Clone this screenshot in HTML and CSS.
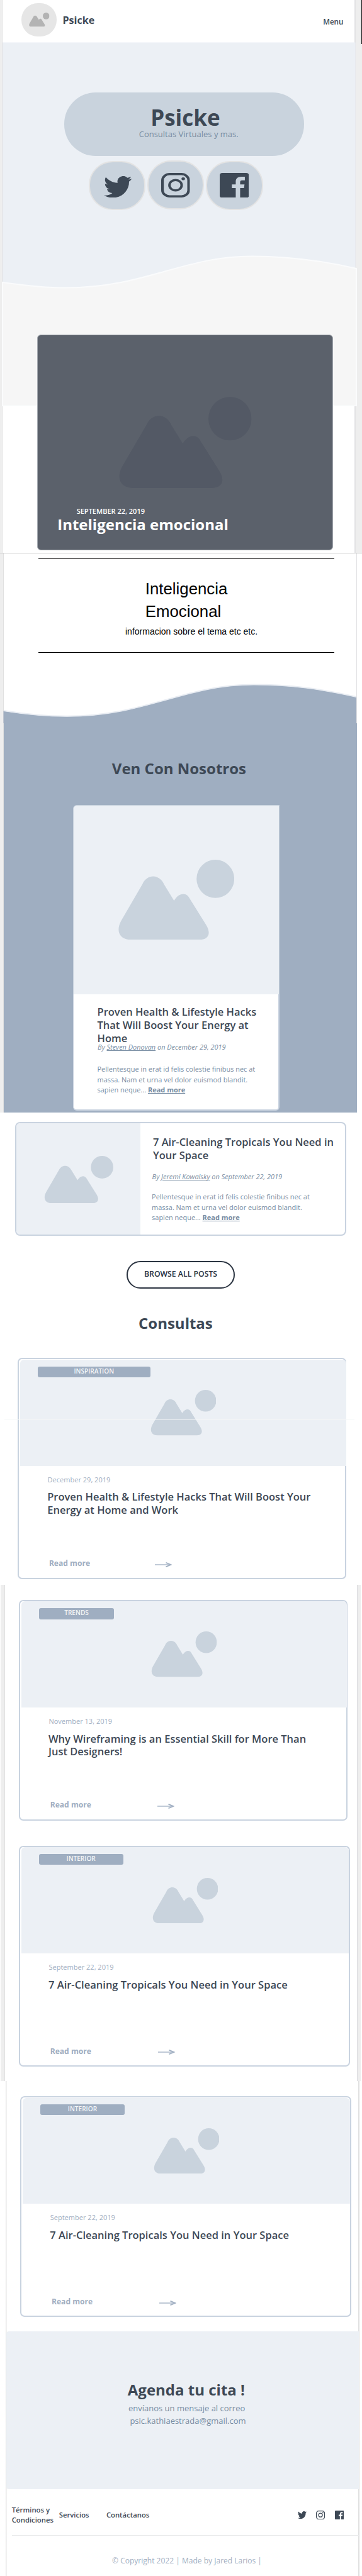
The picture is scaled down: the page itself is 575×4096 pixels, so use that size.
FILE: index.html
```html
<!DOCTYPE html>
<html lang="es">
<head>
<meta charset="utf-8">
<title>Psicke</title>
<link rel="stylesheet" href="styles.css">
</head>
<body>
<svg class="defs" aria-hidden="true">
  <symbol id="picture" viewBox="0 0 212.7 145.6" preserveAspectRatio="none">
    <path d="M6.3 111L45 44.6C53 25.5 76 25.5 84.4 44.6L102.8 74.6C112 59 126 59 131.6 71.3L161 118C171 134 166 145.6 148 145.6H24.7C3 145.6-4 130 6.3 111Z"/>
    <ellipse cx="178.2" cy="34.8" rx="34.4" ry="34.8"/>
  </symbol>
  <symbol id="twitter" viewBox="0 2.2 24 19.6" preserveAspectRatio="none">
    <path d="M23.95 4.57a10 10 0 0 1-2.82.77 4.96 4.96 0 0 0 2.16-2.72c-.95.55-2 .95-3.13 1.18a4.92 4.92 0 0 0-8.38 4.48C7.69 8.1 4.07 6.13 1.64 3.16a4.92 4.92 0 0 0 1.52 6.57 4.9 4.9 0 0 1-2.23-.61v.06a4.92 4.92 0 0 0 3.95 4.83 5 5 0 0 1-2.21.08 4.94 4.94 0 0 0 4.6 3.42A9.87 9.87 0 0 1 0 19.54a14 14 0 0 0 7.55 2.21c9.05 0 14-7.5 14-13.98 0-.21 0-.42-.02-.63a9.94 9.94 0 0 0 2.42-2.57Z"/>
  </symbol>
  <symbol id="instagram" viewBox="0 0 24 24" preserveAspectRatio="none">
    <rect x="1.1" y="1.1" width="21.8" height="21.8" rx="6" fill="none" stroke="currentColor" stroke-width="2.2"/>
    <circle cx="12" cy="12" r="5.1" fill="none" stroke="currentColor" stroke-width="2.1"/>
    <circle cx="18.4" cy="5.7" r="1.45"/>
  </symbol>
  <symbol id="facebook" viewBox="0 0 24 24" preserveAspectRatio="none">
    <path d="M2.2 0H21.8A2.2 2.2 0 0 1 24 2.2V21.8A2.2 2.2 0 0 1 21.8 24H16.8V14.6H20L20.4 11.1H16.8V8.9C16.8 7.7 17.2 7.1 18.6 7.1H20.7V3.7H17.9C14.7 3.7 13.2 5.5 13.2 8.4V11.1H10V14.6H13.2V24H2.2A2.2 2.2 0 0 1 0 21.8V2.2A2.2 2.2 0 0 1 2.2 0Z"/>
  </symbol>
  <symbol id="arrow" viewBox="0 0 27 8">
    <path d="M0 4H24" fill="none" stroke="#b9c5d3" stroke-width="1.8"/>
    <path d="M17.5 .7L25.5 4L17.5 7.3" fill="none" stroke="#9faec1" stroke-width="1.7"/>
  </symbol>
</svg>

<div class="page">
  <section class="top">
    <svg class="top-wave" viewBox="0 0 575 646">
      <path d="M4 67.5H564.5V646H4Z" fill="#ecf0f5"/>
      <path d="M4 449C40 454 75 457.6 104.5 457.6C230 457.6 290 407.5 400 407.5C460 407.5 510 414 566 427V645.5H4Z" fill="#f6f6f6" stroke="#fafbfc" stroke-width="2"/>
    </svg>
    <header class="bar">
      <div class="avatar"><svg><use href="#picture"/></svg></div>
      <b class="brand">Psicke</b>
      <span class="menu">Menu</span>
    </header>
    <div class="pill">
      <h1>Psicke</h1>
      <p>Consultas Virtuales y mas.</p>
    </div>
    <div class="social">
      <a class="bubble"><svg class="tw"><use href="#twitter"/></svg></a>
      <a class="bubble raised"><svg class="ig"><use href="#instagram"/></svg></a>
      <a class="bubble"><svg class="fb"><use href="#facebook"/></svg></a>
    </div>
    <article class="feature">
      <svg><use href="#picture"/></svg>
      <time>SEPTEMBER 22, 2019</time>
      <h2>Inteligencia emocional</h2>
    </article>
    <i class="edge"></i>
  </section>

  <section class="middle">
    <div class="topic">
      <h2>Inteligencia<br>Emocional</h2>
      <p>informacion sobre el tema etc etc.</p>
    </div>
    <svg class="wave" viewBox="0 0 575 70">
      <path d="M5.5 50.5C40 56 75 59.2 106.3 59.2C232 59.2 292 9 403 9C463 9 510 16 566 28.5V71H5.5Z" fill="#9faec1"/>
      <path d="M6 50C40 55.5 75 58.7 106.3 58.7C232 58.7 292 8.5 403 8.5C463 8.5 510 15.5 566 28" fill="none" stroke="#e9edf3" stroke-width="2"/>
    </svg>
    <div class="blue">
      <h2>Ven Con Nosotros</h2>
      <article class="story">
        <div class="story-image"><svg><use href="#picture"/></svg></div>
        <div class="story-body">
          <h3>Proven Health &amp; Lifestyle Hacks<br>That Will Boost Your Energy at<br>Home</h3>
          <p class="by">By <u>Steven Donovan</u> on December 29, 2019</p>
          <p class="text">Pellentesque in erat id felis colestie finibus nec at<br>massa. Nam et urna vel dolor euismod blandit.<br>sapien neque... <b>Read more</b></p>
        </div>
      </article>
    </div>
  </section>

  <section class="posts-a">
    <article class="row-story">
      <div class="row-image"><svg><use href="#picture"/></svg></div>
      <div class="row-body">
        <h3>7 Air-Cleaning Tropicals You Need in<br>Your Space</h3>
        <p class="by">By <u>Jeremi Kowalsky</u> on September 22, 2019</p>
        <p class="text">Pellentesque in erat id felis colestie finibus nec at<br>massa. Nam et urna vel dolor euismod blandit.<br>sapien neque... <b>Read more</b></p>
      </div>
    </article>
    <a class="browse">BROWSE ALL POSTS</a>
    <h2 class="consultas">Consultas</h2>
    <article class="post post-one">
      <div class="post-image">
        <span class="tag tag-inspiration">INSPIRATION</span>
        <svg><use href="#picture"/></svg>
        <i class="seam"></i>
      </div>
      <time>December 29, 2019</time>
      <h3>Proven Health &amp; Lifestyle Hacks That Will Boost Your<br>Energy at Home and Work</h3>
      <div class="more"><b>Read more</b><svg><use href="#arrow"/></svg></div>
    </article>
  </section>

  <section class="posts-b">
    <article class="post post-two">
      <div class="post-image">
        <span class="tag tag-trends">TRENDS</span>
        <svg><use href="#picture"/></svg>
      </div>
      <time>November 13, 2019</time>
      <h3>Why Wireframing is an Essential Skill for More Than<br>Just Designers!</h3>
      <div class="more"><b>Read more</b><svg><use href="#arrow"/></svg></div>
    </article>
    <article class="post post-three">
      <div class="post-image">
        <span class="tag tag-interior">INTERIOR</span>
        <svg><use href="#picture"/></svg>
      </div>
      <time>September 22, 2019</time>
      <h3>7 Air-Cleaning Tropicals You Need in Your Space</h3>
      <div class="more"><b>Read more</b><svg><use href="#arrow"/></svg></div>
    </article>
  </section>

  <section class="bottom">
    <article class="post post-four">
      <div class="post-image">
        <span class="tag tag-interior">INTERIOR</span>
        <svg><use href="#picture"/></svg>
      </div>
      <time>September 22, 2019</time>
      <h3>7 Air-Cleaning Tropicals You Need in Your Space</h3>
      <div class="more"><b>Read more</b><svg><use href="#arrow"/></svg></div>
    </article>
    <div class="cta">
      <h2>Agenda tu cita !</h2>
      <p>envíanos un mensaje al correo</p>
      <p class="mail">psic.kathiaestrada@gmail.com</p>
    </div>
    <footer>
      <nav>
        <a class="terms">Términos y<br>Condiciones</a>
        <a class="services">Servicios</a>
        <a class="contact">Contáctanos</a>
        <svg class="tw"><use href="#twitter"/></svg>
        <svg class="ig"><use href="#instagram"/></svg>
        <svg class="fb"><use href="#facebook"/></svg>
      </nav>
      <p>© Copyright 2022 | Made by Jared Larios |</p>
    </footer>
  </section>
</div>
</body>
</html>
```
FILE: styles.css
```css
* { box-sizing: border-box; margin: 0; padding: 0; }
body {
  width: 575px;
  background: #fff;
  color: #3d4855;
  font-family: "Open Sans", "Noto Sans", sans-serif;
  white-space: nowrap;
}
svg { display: block; fill: currentColor; }
.defs { position: absolute; width: 0; height: 0; }
.page { width: 575px; height: 4096px; overflow: hidden; }
h2 { font-size: 24px; line-height: 30px; font-weight: 700; }
h3 { font-size: 16.5px; line-height: 20.9px; font-weight: 600; }
section { display: flow-root; }

/* Header and hero */
.top {
  position: relative;
  height: 880px;
  background: linear-gradient(90deg, #eee 3px, #e0e0e0 3px 4px, #fff 4px 563.5px, #e2e2e4 563.5px 565px, #eee 565px);
  border-bottom: 1px solid #ccc;
}
.top-wave { position: absolute; left: 0; top: 0; width: 575px; height: 646px; }
.edge { position: absolute; right: 0; top: 0; width: 1px; height: 70px; background: #111; }
.bar { position: relative; display: flex; align-items: flex-start; height: 67.5px; padding: 4.6px 0 0 34px; }
.avatar { width: 56.4px; height: 53.1px; padding: 15.6px 0 0 12px; border-radius: 26px; background: #e6e6e6; color: #b3b3b3; }
.avatar svg { width: 32.5px; height: 22.5px; }
.brand { margin: 17px 0 0 9.1px; width: 413.7px; font-size: 16.1px; line-height: 20px; }
.menu { margin-top: 22.7px; font-size: 11.65px; line-height: 16px; font-weight: 600; }
.pill {
  position: relative;
  width: 381.7px;
  height: 100.5px;
  margin: 79.9px 0 0 101.6px;
  padding-top: 21.8px;
  border-radius: 50px;
  background: #c9d3dd;
}
.pill h1 { padding-left: 137.6px; font-size: 35px; line-height: 36px; }
.pill p { padding-left: 119.1px; font-size: 13px; line-height: 16px; color: #778ca2; }
.social { position: relative; display: flex; gap: 3.2px; margin: 8px 0 0 140.6px; height: 77.7px; }
.bubble {
  display: flex;
  justify-content: center;
  width: 90.2px;
  height: 77.7px;
  border: 2px solid #e3e3e3;
  border-radius: 38px;
  background: #c9d3dd;
}
.raised { margin-top: -1px; }
.bubble .tw { width: 44.5px; height: 34.5px; margin: 22px 0 0 4px; }
.bubble .ig { width: 45.7px; height: 39px; margin: 18px 0 0 0; }
.bubble .fb { width: 46.3px; height: 39.5px; margin: 17px 0 0 0; }
.feature {
  position: relative;
  width: 470px;
  height: 343.2px;
  margin: 198px 0 0 59px;
  padding-top: 98.3px;
  border: 1px solid #a7acb3;
  border-radius: 6px;
  background: #5b616b;
  color: #fff;
}
.feature svg { width: 211.6px; height: 145px; margin-left: 128.1px; color: #535965; }
.feature time { display: block; margin: 30.2px 0 0 61.7px; font-size: 11px; line-height: 14px; font-weight: 600; }
.feature h2 { padding-left: 31.2px; line-height: 27px; }

/* Topic and featured story */
.middle {
  height: 889.3px;
  padding-top: 8px;
  background: linear-gradient(90deg, #eee 5px, #e0e0e0 5px 6px, #fff 6px 566px, #e2e2e4 566px 567px, #fff 567px);
}
.topic {
  width: 470.5px;
  height: 150.3px;
  margin-left: 60.5px;
  padding-top: 30px;
  border: solid #000;
  border-width: 1px 0;
  color: #000;
  font-family: "Liberation Sans", Arial, sans-serif;
}
.topic h2 { padding-left: 170.3px; font-size: 25.8px; line-height: 35.9px; font-weight: 400; }
.topic p { margin: 3.9px 0 0 138.5px; font-size: 14px; line-height: 18px; }
.wave { width: 575px; height: 70px; margin-top: 41.7px; }
.blue { display: flow-root; width: 561.5px; height: 619.3px; margin-left: 5.5px; background: #9faec1; }
.blue > h2 { margin: 56.9px 0 43.3px; padding-left: 172.3px; }
.story { width: 327.8px; margin-left: 110.4px; }
.story-image { height: 300.6px; padding: 85.8px 0 0 70px; border: 1px solid #c6d0dc; border-bottom: 0; border-radius: 6px 0 0 0; background: #ecf0f5; }
.story-image svg { width: 185.2px; height: 127.3px; color: #c9d3dd; }
.story-body { height: 185.1px; padding: 18.3px 0 0 37.6px; border: solid #c9d3e0; border-width: 0 2px 2px 1px; border-radius: 0 0 6px 6px; background: #fff; }
.by { font-size: 10.95px; line-height: 14px; font-style: italic; color: #778ca2; }
.text { font-size: 10.97px; line-height: 16.5px; color: #778ca2; }
.text b { text-decoration: underline; }
.story .by { margin: -3.4px 0 19.8px .6px; }

/* Posts */
.posts-a { height: 750.6px; padding-top: 14.8px; }
.row-story { display: flex; width: 525.8px; height: 181px; margin-left: 24.2px; border: 2px solid #c9d3e0; border-radius: 8px; }
.row-image { width: 197.1px; padding: 51.5px 0 0 43.8px; border-radius: 6px 0 0 6px; background: #ecf0f5; }
.row-image svg { width: 110px; height: 75.3px; color: #c9d3dd; }
.row-body { padding: 20.2px 0 0 19.7px; }
.row-body .by { margin: 15.8px 0 17.5px -1.4px; }
.row-body .text { margin-left: -1.9px; }
.browse {
  display: block;
  width: 172px;
  height: 43.5px;
  margin: 40.1px 0 0 201px;
  padding: 10.5px 0 0 26px;
  border: 2px solid #2b3441;
  border-radius: 22px;
  color: #262f3d;
  font-size: 12.25px;
  line-height: 16px;
  font-weight: 600;
}
.consultas { margin: 40.4px 0 40.4px 220px; }
.posts-b {
  height: 789.5px;
  padding-top: 23.8px;
  background: linear-gradient(90deg, #fff 1px, #eee 1px 7px, #e0e0e0 7px 8px, #fff 8px 567.5px, #e2e2e4 567.5px 569px, #eee 569px 573px, #fff 573px);
}
.post { height: 351.1px; border: 2px solid #c9d3e0; border-radius: 7px; }
.post-one { width: 521.8px; margin-left: 28.2px; }
.post-two { width: 522.3px; margin-left: 30px; }
.post-three { width: 526px; margin: 40.1px 0 0 30px; }
.post-four { width: 525.7px; margin-left: 32.3px; }
.post-image { position: relative; height: 168.6px; margin: .6px 0 0 1.7px; padding-top: 11px; border-radius: 6px 6px 0 0; background: #ecf0f5; }
.post-one .post-image { margin-right: -2px; }
.post-two .post-image { margin-right: -1px; }
.post-image svg { width: 104.5px; height: 72.4px; margin: 19.8px 0 0 206.8px; color: #c9d3dd; }
.tag { display: block; height: 17.3px; margin-left: 27.9px; border-radius: 3px; background: #9faec1; color: #f4f6f8; font-size: 10.1px; line-height: 15px; font-weight: 600; text-align: center; }
.tag-inspiration { width: 179px; }
.tag-trends { width: 119.9px; }
.tag-interior { width: 134.2px; }
.post-three .post-image, .post-four .post-image { padding-top: 10.1px; }
.post-three .post-image svg, .post-four .post-image svg { margin: 20.7px 0 0 208px; }
.seam { position: absolute; left: -25px; right: -13px; top: 94px; height: 2px; background: rgba(246, 247, 248, .5); }
.post time { display: block; margin: 14.9px 0 10.8px 45.4px; font-size: 11.04px; line-height: 14px; color: #9faec1; }
.post h3 { height: 41.8px; padding-left: 45px; }
.more { display: flex; margin: 66.1px 0 0 47.7px; color: #9faec1; font-size: 12.1px; line-height: 16px; }
.more b { width: 168.5px; }
.more svg { width: 27px; height: 8px; margin-top: 5.7px; }
.post-two .more b { width: 170px; }
.post-three .more b, .post-four .more b { width: 171.5px; }

/* Contact and footer */
.bottom {
  height: 786.6px;
  padding-top: 23.9px;
  background: linear-gradient(90deg, #fff 9px, #e0e0e0 9px 10px, #f2f2f2 10px 11px, #fff 11px 569.5px, #e0e0e0 569.5px 571px, #fff 571px);
}
.cta { width: 559.7px; height: 250.6px; margin: 23.1px 0 0 10.3px; padding: 77.3px 0 0 192.5px; border-radius: 4px 0 0 4px; background: #ecf0f5; }
.cta h2 { margin-bottom: 4.1px; }
.cta p { padding-left: 1.2px; font-size: 13px; line-height: 20.2px; color: #778ca2; }
.cta .mail { padding-left: 3.6px; }
nav {
  display: flex;
  align-items: center;
  width: 551.3px;
  height: 73.8px;
  margin-left: 18.7px;
  padding: 25.8px 0 17.4px;
  border-bottom: 1px solid #e9eaec;
  font-size: 11.3px;
  line-height: 15.3px;
  font-weight: 600;
}
.terms { width: 75px; }
.services { width: 75.2px; }
.contact { width: 304.5px; }
nav .tw { width: 14px; height: 12.2px; }
nav .ig { width: 14.2px; height: 14.3px; margin: 0 15px; }
nav .fb { width: 14.3px; height: 14.3px; }
footer p { margin: 32.5px 0 0 178px; font-size: 12.04px; line-height: 16px; color: #9faec1; }
```
